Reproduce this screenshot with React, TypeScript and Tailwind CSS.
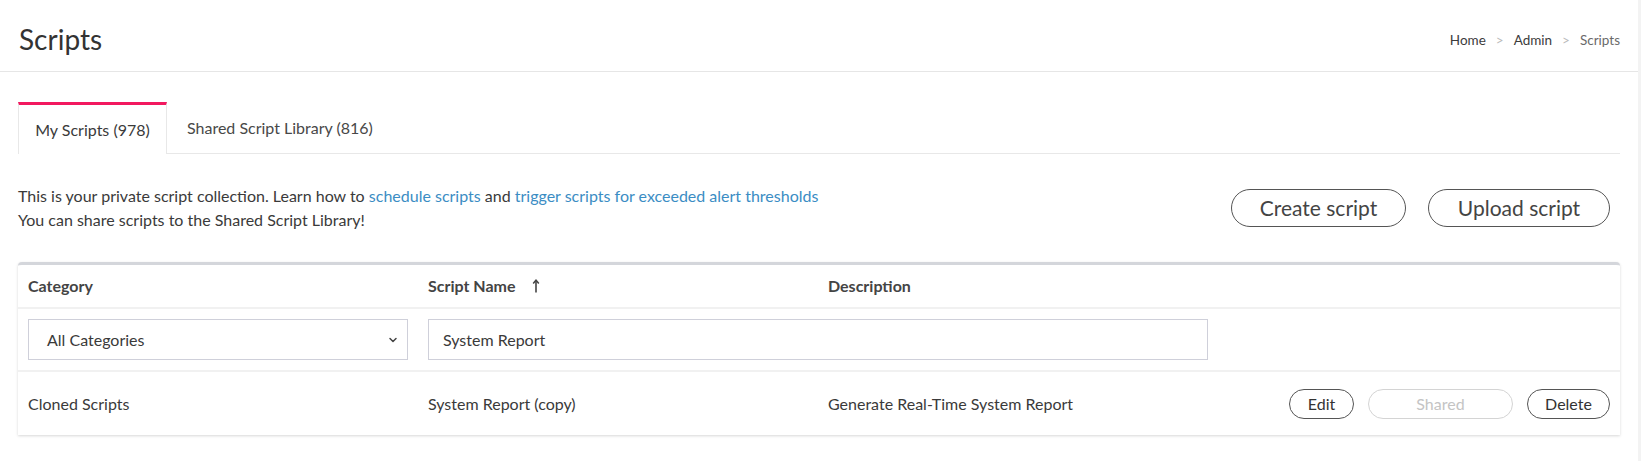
import { ChevronDown } from 'lucide-react'

const pill = 'flex items-center justify-center rounded-full border bg-white'

function SortArrow() {
  return (
    <svg width="8" height="14" viewBox="0 0 8 14" className="ml-[16px]">
      <path d="M4 1.5 V13.5" stroke="#444" strokeWidth="1.6" fill="none" />
      <path d="M1.2 4.6 L4 1.2 L6.8 4.6" stroke="#444" strokeWidth="1.5" fill="none" />
    </svg>
  )
}

export default function App() {
  return (
    <div className="flex min-h-[461px] bg-white font-['Lato',sans-serif] text-[#3a3a3a]">
      <div className="flex-1 min-w-0">
        {/* Page header */}
        <header className="h-[72px] flex items-center justify-between px-[18px] border-b border-[#e6e6e6]">
          <h1 className="text-[28px] leading-none pl-px pt-[6px] text-[#333]">Scripts</h1>
          <nav className="flex items-center text-[13.5px] pt-[10px]">
            <span className="text-[#3c3c3c]">Home</span>
            <span className="mx-[10px] text-[#bbb]">&gt;</span>
            <span className="text-[#3c3c3c]">Admin</span>
            <span className="mx-[10px] text-[#bbb]">&gt;</span>
            <span className="text-[#6a6a6a]">Scripts</span>
          </nav>
        </header>

        <div className="px-[18px]">
          {/* Tabs */}
          <div className="mt-[30px] flex items-stretch">
            <div className="w-[149px] h-[52px] flex items-center justify-center border-t-[3px] border-[#f2185f] border-x border-x-[#e8e8e8] text-[16px] text-[#3a3a3a]">
              My Scripts (978)
            </div>
            <div className="h-[52px] flex items-center pl-[20px] pr-[20px] border-b border-[#e8e8e8] text-[16px] text-[#484848]">
              Shared Script Library (816)
            </div>
            <div className="flex-1 border-b border-[#e8e8e8]" />
          </div>

          {/* Intro + actions */}
          <div className="mt-[30px] flex items-center justify-between">
            <div className="text-[16px] leading-[24px] text-[#3a3a3a]">
              <p>
                This is your private script collection. Learn how to{' '}
                <a className="text-[#3b8dc4]">schedule scripts</a> and{' '}
                <a className="text-[#3b8dc4]">trigger scripts for exceeded alert thresholds</a>
              </p>
              <p>You can share scripts to the Shared Script Library!</p>
            </div>
            <div className="flex items-center gap-[22px] mr-[10px]">
              <button className={`${pill} w-[175px] h-[38px] border-[#555] text-[21px] text-[#444]`}>
                Create script
              </button>
              <button className={`${pill} w-[182px] h-[38px] border-[#555] text-[21px] text-[#444]`}>
                Upload script
              </button>
            </div>
          </div>

          {/* Table */}
          <div className="mt-[30px] rounded-t-[4px] border-t-[3px] border-[#d4d6db] bg-white shadow-[0_1px_3px_rgba(0,0,0,0.16)]">
            <div className="grid grid-cols-[400px_400px_400px_1fr] h-[44px] items-center border-b-2 border-[#f1f1f1] text-[16px] font-bold text-[#444]">
              <div className="pl-[10px]">Category</div>
              <div className="pl-[10px] flex items-center">
                Script Name
                <SortArrow />
              </div>
              <div className="pl-[10px]">Description</div>
              <div />
            </div>

            <div className="grid grid-cols-[400px_800px_1fr] py-[10px] border-b-2 border-[#f1f1f1] text-[16px]">
              <div className="px-[10px]">
                <div className="h-[41px] flex items-center justify-between pl-[18px] pr-[8px] border border-[#cfd0da] text-[#3a3a3a]">
                  <span>All Categories</span>
                  <ChevronDown className="w-[12px] h-[12px] text-[#444]" strokeWidth={3} />
                </div>
              </div>
              <div className="px-[10px]">
                <div className="h-[41px] flex items-center pl-[14px] border border-[#cfd0da] text-[#3a3a3a]">
                  System Report
                </div>
              </div>
              <div />
            </div>

            <div className="grid grid-cols-[400px_400px_400px_1fr] h-[63px] items-center text-[16px] text-[#3a3a3a]">
              <div className="pl-[10px]">Cloned Scripts</div>
              <div className="pl-[10px]">System Report (copy)</div>
              <div className="pl-[10px]">Generate Real-Time System Report</div>
              <div className="flex justify-end items-center gap-[14px] pr-[10px]">
                <button className={`${pill} w-[65px] h-[30px] border-[#555] text-[#333]`}>Edit</button>
                <button className={`${pill} w-[145px] h-[30px] border-[#d4d4d4] text-[#c4c4c4]`}>Shared</button>
                <button className={`${pill} w-[83px] h-[30px] border-[#555] text-[#333]`}>Delete</button>
              </div>
            </div>
          </div>
        </div>
      </div>
      <div className="w-[3px] bg-[#f3f3f3]" />
    </div>
  )
}
